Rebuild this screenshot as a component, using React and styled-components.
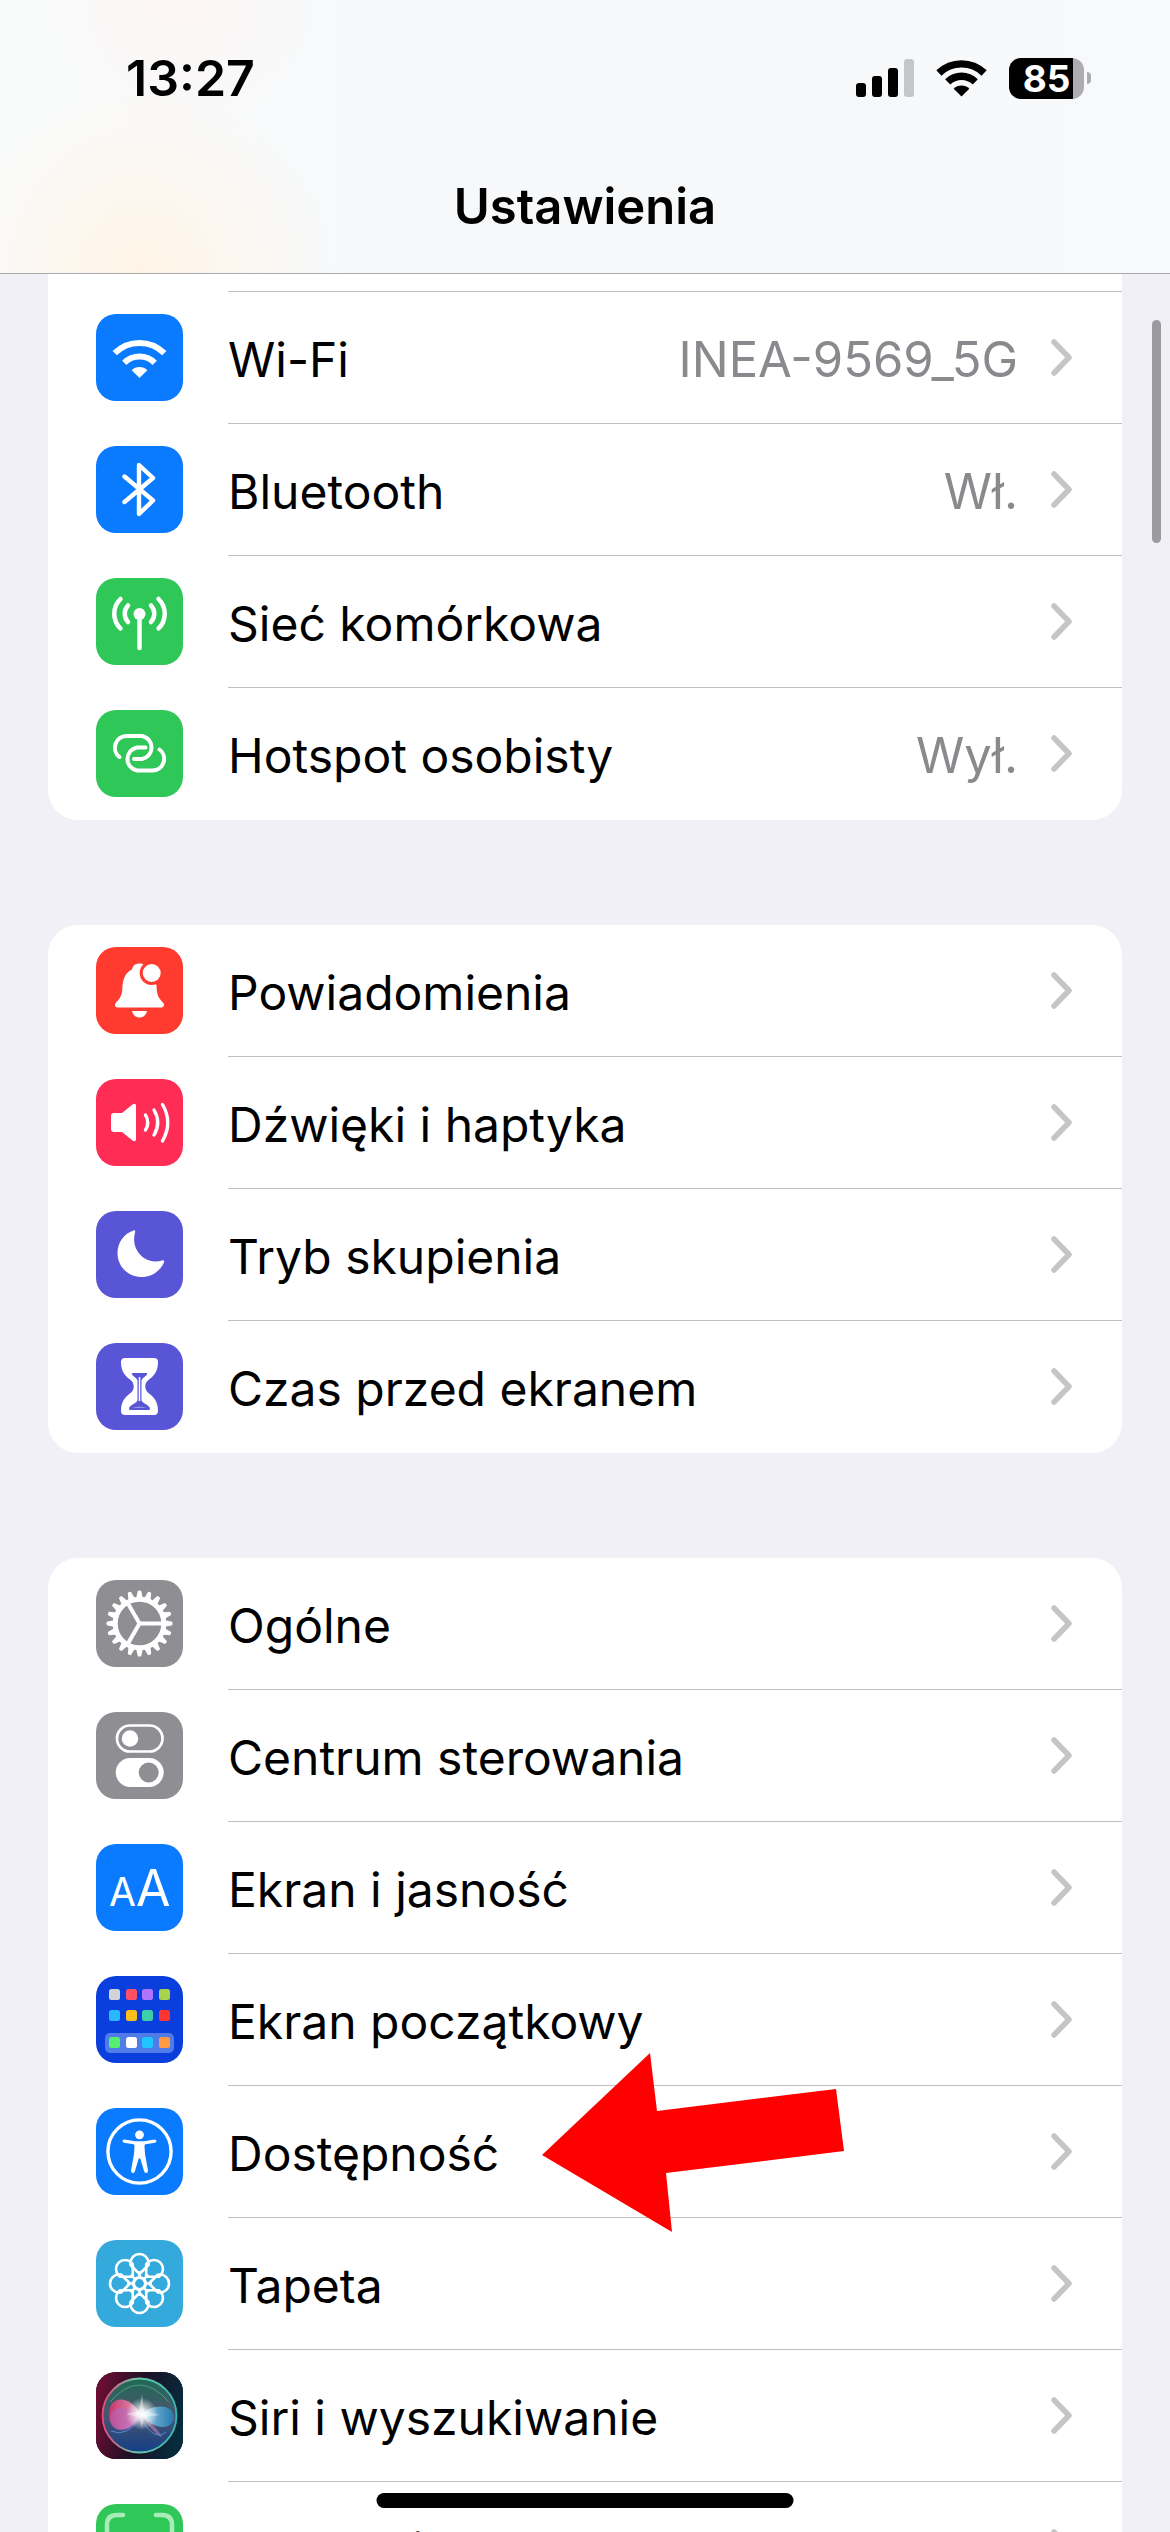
import React from 'react';
import styled, { createGlobalStyle } from 'styled-components';

const connectivity = [
  { id: 'wifi', label: 'Wi-Fi', value: 'INEA-9569_5G', color: '#0a7aff', Icon: WifiIcon },
  { id: 'bluetooth', label: 'Bluetooth', value: 'Wł.', color: '#0a7aff', Icon: BluetoothIcon },
  { id: 'cellular', label: 'Sieć komórkowa', color: '#30c759', Icon: CellularIcon },
  { id: 'hotspot', label: 'Hotspot osobisty', value: 'Wył.', color: '#30c759', Icon: HotspotIcon },
];

const attention = [
  { id: 'notifications', label: 'Powiadomienia', color: '#ff3b30', Icon: BellIcon },
  { id: 'sounds', label: 'Dźwięki i haptyka', color: '#ff2d55', Icon: SpeakerIcon },
  { id: 'focus', label: 'Tryb skupienia', color: '#5856d6', Icon: MoonIcon },
  { id: 'screen-time', label: 'Czas przed ekranem', color: '#5856d6', Icon: HourglassIcon },
];

const system = [
  { id: 'general', label: 'Ogólne', color: '#8e8e93', Icon: GearIcon },
  { id: 'control-center', label: 'Centrum sterowania', color: '#8e8e93', Icon: TogglesIcon },
  { id: 'display', label: 'Ekran i jasność', color: '#0a7aff', Icon: LettersIcon },
  { id: 'home-screen', label: 'Ekran początkowy', color: '#0b3fdd', Icon: HomeGridIcon },
  { id: 'accessibility', label: 'Dostępność', color: '#0a7aff', Icon: AccessibilityIcon, isPointed: true },
  { id: 'wallpaper', label: 'Tapeta', color: '#34aadc', Icon: FlowerIcon },
  { id: 'siri', label: 'Siri i wyszukiwanie', color: '#1a1030', Icon: SiriIcon },
  { id: 'face-id', label: 'Face ID i kod', color: '#30c759', Icon: FaceIdIcon },
];

export default function App() {
  return (
    <Screen>
      <GlobalStyle />
      <Header>
        <StatusBar>
          <Time>13:27</Time>
          <StatusIcons>
            <SignalIcon />
            <StatusWifiIcon />
            <Battery level={85} />
          </StatusIcons>
        </StatusBar>
        <Title>Ustawienia</Title>
      </Header>
      <Content>
        <Groups>
          <SettingsGroup items={connectivity} isScrolled />
          <SettingsGroup items={attention} />
          <SettingsGroup items={system} />
        </Groups>
        <ScrollThumb />
      </Content>
      <HomeIndicator />
    </Screen>
  );
}

function SettingsGroup({ items, isScrolled }) {
  return (
    <Card $isScrolled={isScrolled}>
      {isScrolled && <ScrolledRow />}
      {items.map(item => (
        <SettingsRow key={item.id} {...item} />
      ))}
    </Card>
  );
}

function SettingsRow({ id, label, value, color, Icon, isPointed }) {
  return (
    <Item>
      <RowLink href={`#${id}`}>
        <IconTile $color={color}>
          <Icon />
        </IconTile>
        <RowBody>
          <Label>{label}</Label>
          {value && <Value>{value}</Value>}
          <Chevron viewBox="0 0 21 37" aria-hidden="true">
            <path d="M3 3L18 18.500L3 34" />
          </Chevron>
        </RowBody>
      </RowLink>
      {isPointed && (
        <Pointer viewBox="0 0 302 180" aria-hidden="true">
          <path d="M0 103L108 1L115 59L294 37L302 99L124 121L130 180Z" />
        </Pointer>
      )}
    </Item>
  );
}

/* status bar */

function SignalIcon() {
  return (
    <svg width="58" height="38" viewBox="0 0 58 38" aria-hidden="true">
      <rect x="0" y="24" width="10" height="14" rx="3" />
      <rect x="16" y="17" width="10" height="21" rx="3" />
      <rect x="32" y="9" width="10" height="29" rx="3" />
      <rect x="48" y="0" width="10" height="38" rx="3" fill="#c5c6c8" />
    </svg>
  );
}

function StatusWifiIcon() {
  return (
    <svg width="51" height="38" viewBox="0 0 51 38" aria-hidden="true">
      <g fill="none" stroke="#000" strokeWidth="7.400">
        <path d="M2.900 14A32.500 32.500 0 0 1 48.100 14" />
        <path d="M11.700 22.800A19.800 19.800 0 0 1 39.300 22.800" />
      </g>
      <path d="M25.500 37.500L17.700 29.700A11 11 0 0 1 33.300 29.700Z" />
    </svg>
  );
}

function Battery({ level }) {
  return (
    <BatteryWrapper>
      <BatteryBody>{level}</BatteryBody>
      <BatteryTip />
    </BatteryWrapper>
  );
}

/* row icons, all drawn on an 87 unit tile */

function Glyph({ children }) {
  return (
    <svg width="87" height="87" viewBox="0 0 87 87" fill="none" aria-hidden="true">
      {children}
    </svg>
  );
}

function WifiIcon() {
  return (
    <Glyph>
      <path d="M18.700 39.200A35 35 0 0 1 68.300 39.200" stroke="#fff" strokeWidth="6" />
      <path d="M28.300 48.800A21.500 21.500 0 0 1 58.700 48.800" stroke="#fff" strokeWidth="6" />
      <path d="M43.500 64L35.700 56.200A11 11 0 0 1 51.300 56.200Z" fill="#fff" />
    </Glyph>
  );
}

function BluetoothIcon() {
  return (
    <Glyph>
      <path
        d="M28.500 30.500L57 54.500L43 68V19L57 32L28.500 56"
        stroke="#fff"
        strokeWidth="4.400"
        strokeLinecap="round"
        strokeLinejoin="round"
      />
    </Glyph>
  );
}

function CellularIcon() {
  return (
    <Glyph>
      <circle cx="43.500" cy="36" r="6" fill="#fff" />
      <g stroke="#fff" strokeWidth="4.500" strokeLinecap="round">
        <path d="M43.500 38V70" />
        <path d="M24.500 21A20.500 20.500 0 0 0 24.500 50.500" />
        <path d="M62.500 21A20.500 20.500 0 0 1 62.500 50.500" />
        <path d="M32 27.500A12 12 0 0 0 32 44" />
        <path d="M55 27.500A12 12 0 0 1 55 44" />
      </g>
    </Glyph>
  );
}

function HotspotIcon() {
  return (
    <Glyph>
      <g stroke="#fff" strokeWidth="4" strokeLinecap="round">
        <path d="M23.500 47A11.700 11.700 0 0 1 30.500 26H46A11.700 11.700 0 0 1 46 49H38" />
        <path d="M49.500 37.500H41A11.700 11.700 0 0 0 41 60.500H56.500A11.700 11.700 0 0 0 63.500 39.500" />
      </g>
    </Glyph>
  );
}

function BellIcon() {
  return (
    <Glyph>
      <path
        d="M21.500 60.500C19 60.500 18.200 57.500 20 55.500C23.500 52 26 48.500 26.300 42C26.500 32 29.500 25.500 36 22.500C36.800 18.500 39.500 16.500 43.500 16.500C48 16.500 50.500 19 51.500 23C58 26 60.500 32 60.700 42C61 48.500 63.500 52 67 55.500C68.800 57.500 68 60.500 65.500 60.500Z"
        fill="#fff"
      />
      <path d="M36 64H51C50 68 47.500 70.500 43.500 70.500C39.500 70.500 37 68 36 64Z" fill="#fff" />
      <circle cx="55.700" cy="26" r="12" fill="#ff3b30" />
      <circle cx="55.700" cy="26" r="9" fill="#fff" />
    </Glyph>
  );
}

function SpeakerIcon() {
  return (
    <Glyph>
      <path
        d="M18 34H26L36.500 25.500Q40 23.500 40 27V60Q40 63.500 36.500 61.500L26 53H18Q15 53 15 50V37Q15 34 18 34Z"
        fill="#fff"
      />
      <g stroke="#fff" strokeWidth="3.400" strokeLinecap="round">
        <path d="M49.500 36Q54 43.500 49.500 51" />
        <path d="M58 31Q65.500 43.500 58 56" />
        <path d="M66.500 25.500Q77 43.500 66.500 62" />
      </g>
    </Glyph>
  );
}

function MoonIcon() {
  return (
    <Glyph>
      <path
        d="M37.500 19.500C39 19 39.500 20 39 21.500C36 33 41 42 48 47C53 50.500 60 51.500 66 49.500C67.500 49 68.500 50 68 51.500C64 60.500 55 66 46 66C32 66 21.500 55.500 21.500 42C21.500 31.500 28 22.500 37.500 19.500Z"
        fill="#fff"
      />
    </Glyph>
  );
}

function HourglassIcon() {
  return (
    <Glyph>
      <path
        d="M29 15H58Q62 15 62 19C62 29 57.500 33 53 36.500C50 39 49.300 41 49.300 43.500C49.300 46 50 48 53 50.500C57.500 54 62 58 62 68Q62 72 58 72H29Q25 72 25 68C25 58 29.500 54 34 50.500C37 48 37.700 46 37.700 43.500C37.700 41 37 39 34 36.500C29.500 33 25 29 25 19Q25 15 29 15Z"
        fill="#fff"
      />
      <path
        d="M37 30H50Q52 30 51 31.500C49 34 45.500 35.500 45.500 38V57C45.500 60 52 61 54 65Q54.500 67 52.500 67H34.500Q32.500 67 33 65C35 61 41.500 60 41.500 57V38C41.500 35.500 38 34 36 31.500Q35 30 37 30Z"
        fill="#5856d6"
      />
      <path d="M43.500 34V58" stroke="#fff" strokeWidth="1.500" />
      <path d="M36 65Q43.500 62 51 65Z" fill="#fff" opacity="0.350" />
    </Glyph>
  );
}

function GearIcon() {
  const teeth = Array.from({ length: 20 }, (_, i) => i * 18);
  return (
    <Glyph>
      {teeth.map(angle => (
        <path
          key={angle}
          d="M68 40L76.200 41.800Q77 43.500 76.200 45.200L68 47Z"
          fill="#fff"
          transform={`rotate(${angle} 43.500 43.500)`}
        />
      ))}
      <circle cx="43.500" cy="43.500" r="24.300" stroke="#fff" strokeWidth="5" />
      {[0, 120, 240].map(angle => (
        <path
          key={angle}
          d="M43.500 43.500H66"
          stroke="#fff"
          strokeWidth="4"
          transform={`rotate(${angle} 43.500 43.500)`}
        />
      ))}
    </Glyph>
  );
}

function TogglesIcon() {
  return (
    <Glyph>
      <rect x="21" y="13.500" width="45.500" height="26" rx="13" stroke="#fff" strokeWidth="2.700" />
      <circle cx="34" cy="26.500" r="8.200" fill="#fff" />
      <rect x="19.700" y="46" width="48" height="29" rx="14.500" fill="#fff" />
      <circle cx="52.700" cy="60.500" r="10" fill="#8e8e93" />
    </Glyph>
  );
}

function LettersIcon() {
  return (
    <Glyph>
      <TileText x="13" y="62" fontSize="39">A</TileText>
      <TileText x="40" y="62" fontSize="50">A</TileText>
    </Glyph>
  );
}

function HomeGridIcon() {
  const columns = [13, 30, 46, 63];
  const apps = [
    { y: 13, colors: ['#d0d3d8', '#ff5068', '#b075ff', '#a8d24a'] },
    { y: 34, colors: ['#28b8ff', '#ffc01e', '#3ed0a8', '#ff3530'] },
    { y: 61, colors: ['#55ef70', '#ffffff', '#20c4ff', '#ff9a40'] },
  ];
  return (
    <Glyph>
      <rect x="9" y="57" width="69" height="20" rx="5" fill="#4f7ce8" />
      {apps.map(({ y, colors }) =>
        colors.map((color, i) => (
          <rect key={color} x={columns[i]} y={y} width="11" height="11" rx="2.500" fill={color} />
        ))
      )}
    </Glyph>
  );
}

function AccessibilityIcon() {
  return (
    <Glyph>
      <circle cx="43.500" cy="43.500" r="31.600" stroke="#fff" strokeWidth="3.400" />
      <circle cx="43.500" cy="26.800" r="4.400" fill="#fff" />
      <path
        d="M28.500 31.500L39 33.300H48L58.500 31.500Q60.500 31.500 60.500 33Q60.500 34.300 59 34.700L49.500 36.300Q48.500 36.500 48.500 38L49 46L52 62.500Q52 65 50 65Q48.500 65 48 63L44.300 50.500H42.700L39 63Q38.500 65 37 65Q35 65 35 62.500L38 46L38.500 38Q38.500 36.500 37.500 36.300L28 34.700Q26.500 34.300 26.500 33Q26.500 31.500 28.500 31.500Z"
        fill="#fff"
      />
    </Glyph>
  );
}

function FlowerIcon() {
  const petals = Array.from({ length: 8 }, (_, i) => i * 45);
  return (
    <Glyph>
      <g stroke="#fff" strokeWidth="2.600" strokeLinejoin="round">
        {petals.map(angle => (
          <path
            key={angle}
            d="M43.500 34L34.500 25V23A9 9 0 0 1 52.500 23V25Z"
            transform={`rotate(${angle} 43.500 43.500)`}
          />
        ))}
        {petals.map(angle => (
          <path key={angle} d="M43.500 38V31" transform={`rotate(${angle} 43.500 43.500)`} />
        ))}
        <circle cx="43.500" cy="43.500" r="6" strokeWidth="3.200" />
      </g>
    </Glyph>
  );
}

function SiriIcon() {
  return (
    <Glyph>
      <defs>
        <linearGradient id="siriBack" x1="0" y1="0.300" x2="1" y2="0.500">
          <stop offset="0" stopColor="#6e0d33" />
          <stop offset="0.500" stopColor="#1d1026" />
          <stop offset="1" stopColor="#052c3c" />
        </linearGradient>
        <linearGradient id="siriOrb" x1="0.500" y1="0" x2="0.500" y2="1">
          <stop offset="0" stopColor="#1f6a55" />
          <stop offset="0.500" stopColor="#4b5570" />
          <stop offset="1" stopColor="#123f86" />
        </linearGradient>
        <linearGradient id="siriRing" x1="0" y1="0.500" x2="1" y2="0.500">
          <stop offset="0" stopColor="#f0487c" />
          <stop offset="0.450" stopColor="#6fc5a5" />
          <stop offset="1" stopColor="#37b8b4" />
        </linearGradient>
        <linearGradient id="siriPink" x1="0" y1="0" x2="1" y2="0">
          <stop offset="0" stopColor="#d8326c" />
          <stop offset="1" stopColor="#f2a5c0" />
        </linearGradient>
        <linearGradient id="siriBlue" x1="0" y1="0" x2="1" y2="0">
          <stop offset="0" stopColor="#a8e0f5" />
          <stop offset="1" stopColor="#1c7fb8" />
        </linearGradient>
        <radialGradient id="siriGlow">
          <stop offset="0" stopColor="#fff" />
          <stop offset="0.300" stopColor="#fff" stopOpacity="0.800" />
          <stop offset="1" stopColor="#fff" stopOpacity="0" />
        </radialGradient>
      </defs>
      <rect width="87" height="87" fill="url(#siriBack)" />
      <circle cx="43.500" cy="43.500" r="37" fill="url(#siriOrb)" stroke="url(#siriRing)" strokeWidth="1.800" />
      <path d="M45 43C33 21 13 24 13 42C13 61 33 64 45 43Z" fill="url(#siriPink)" opacity="0.900" />
      <path d="M45 43C33 34 14 32 14 47C15 63 36 63 45 43Z" fill="#b06fd0" opacity="0.450" />
      <path d="M45 43C55 32 77 31 78 45C78 58 58 59 45 43Z" fill="url(#siriBlue)" opacity="0.850" />
      <path d="M46 43C56 50 64 60 66 66C58 60 50 52 46 43Z" fill="#d58ab8" opacity="0.500" />
      <path d="M14 30Q43 -4 73 30" stroke="#58b391" strokeWidth="1" opacity="0.700" />
      <path d="M15 59Q30 66 45 46Q58 70 70 60" stroke="#5a9be8" strokeWidth="1" opacity="0.800" />
      <circle cx="46" cy="42" r="16" fill="url(#siriGlow)" />
      <path d="M46 22L48 39L64 43L48 45L46 56L43 45L30 42L43 39Z" fill="#fff" opacity="0.400" />
    </Glyph>
  );
}

function FaceIdIcon() {
  return (
    <Glyph>
      <g stroke="#a9ecb9" strokeWidth="4.500" strokeLinecap="round">
        <path d="M11 29V21Q11 11 21 11H27" />
        <path d="M60 11H66Q76 11 76 21V29" />
        <path d="M11 58V66Q11 76 21 76H27" />
        <path d="M60 76H66Q76 76 76 66V58" />
      </g>
    </Glyph>
  );
}

const GlobalStyle = createGlobalStyle`
  * {
    box-sizing: border-box;
  }

  body {
    margin: 0;
    background-color: #f0f0f6;
    font-family: Inter, Roboto, sans-serif;
    color: #000;
  }
`;

const Screen = styled.div`
  position: relative;
  display: flex;
  flex-direction: column;
  height: 100vh;
  overflow: hidden;
`;

const Header = styled.header`
  flex-shrink: 0;
  padding-bottom: 28px;
  border-bottom: 1px solid #a9a9ad;
  background:
    radial-gradient(circle at 12% 100%, #fff4e6 0, rgba(255, 244, 230, 0) 190px),
    radial-gradient(circle at 15% 0, #fcf6f4 0, rgba(252, 246, 244, 0) 140px),
    linear-gradient(90deg, #f9fbfb, #f7f8fa 40%, #f8f9fb);
`;

const StatusBar = styled.div`
  display: flex;
  align-items: center;
  justify-content: space-between;
  padding: 48px 79px 60px 126px;
`;

const Time = styled.time`
  font-size: 50px;
  font-weight: 600;
  line-height: 60px;
`;

const StatusIcons = styled.div`
  display: flex;
  align-items: center;
  gap: 22px;
`;

const BatteryWrapper = styled.div`
  display: flex;
  align-items: center;
  gap: 3px;
`;

const BatteryBody = styled.span`
  width: 75px;
  border-radius: 12px;
  background: linear-gradient(90deg, #000 85%, #adadaf 85%);
  color: #fff;
  font-size: 37px;
  font-weight: 700;
  line-height: 41px;
  text-align: center;
`;

const BatteryTip = styled.span`
  width: 4px;
  height: 12px;
  border-radius: 0 6px 6px 0;
  background-color: #adadaf;
`;

const Title = styled.h1`
  margin: 0;
  font-size: 49px;
  font-weight: 600;
  line-height: 77px;
  text-align: center;
`;

const Content = styled.main`
  position: relative;
  flex: 1;
  min-height: 0;
  overflow: hidden;
`;

const Groups = styled.div`
  display: flex;
  flex-direction: column;
  gap: 105px;
  padding: 0 48px;
`;

const Card = styled.ul`
  margin: 0;
  padding: 0;
  list-style: none;
  border-radius: ${props => (props.$isScrolled ? '0 0 30px 30px' : '30px')};
  background-color: #fff;
`;

/* bottom edge of the row that has gone under the header */
const ScrolledRow = styled.li`
  height: 18px;
  margin-left: 180px;
  border-bottom: 1px solid #c0c0c2;
`;

const Item = styled.li`
  position: relative;
`;

const RowLink = styled.a`
  display: flex;
  align-items: center;
  gap: 45px;
  height: 132px;
  padding-left: 48px;
  color: inherit;
  text-decoration: none;
`;

const IconTile = styled.span`
  flex-shrink: 0;
  width: 87px;
  height: 87px;
  margin-bottom: 1px;
  border-radius: 20px;
  overflow: hidden;
  background-color: ${props => props.$color};

  svg {
    display: block;
  }
`;

const TileText = styled.text`
  fill: #fff;
  font-weight: 400;
`;

const RowBody = styled.span`
  display: flex;
  flex: 1;
  align-items: center;
  align-self: stretch;
  padding-right: 50px;
  border-bottom: 1px solid #c0c0c2;

  ${Item}:last-child & {
    border-bottom-color: transparent;
  }
`;

const Label = styled.span`
  flex: 1;
  padding-top: 4px;
  font-size: 48px;
  line-height: 60px;
  white-space: nowrap;
`;

const Value = styled.span`
  padding-top: 4px;
  margin-right: 33px;
  color: #8a8a8e;
  font-size: 49px;
  line-height: 60px;
`;

const Chevron = styled.svg`
  width: 21px;
  height: 37px;
  fill: none;
  stroke: #c5c5c7;
  stroke-width: 5.5;
  stroke-linecap: round;
  stroke-linejoin: round;
`;

const Pointer = styled.svg`
  position: absolute;
  z-index: 1;
  top: -34px;
  left: 494px;
  width: 302px;
  height: 180px;
  fill: #ff0000;
`;

const ScrollThumb = styled.div`
  position: absolute;
  top: 46px;
  right: 9px;
  width: 9px;
  height: 223px;
  border-radius: 5px;
  background-color: #9a9a9f;
`;

const HomeIndicator = styled.div`
  position: absolute;
  bottom: 24px;
  left: 50%;
  width: 417px;
  height: 15px;
  border-radius: 8px;
  background-color: #000;
  transform: translateX(-50%);
`;
